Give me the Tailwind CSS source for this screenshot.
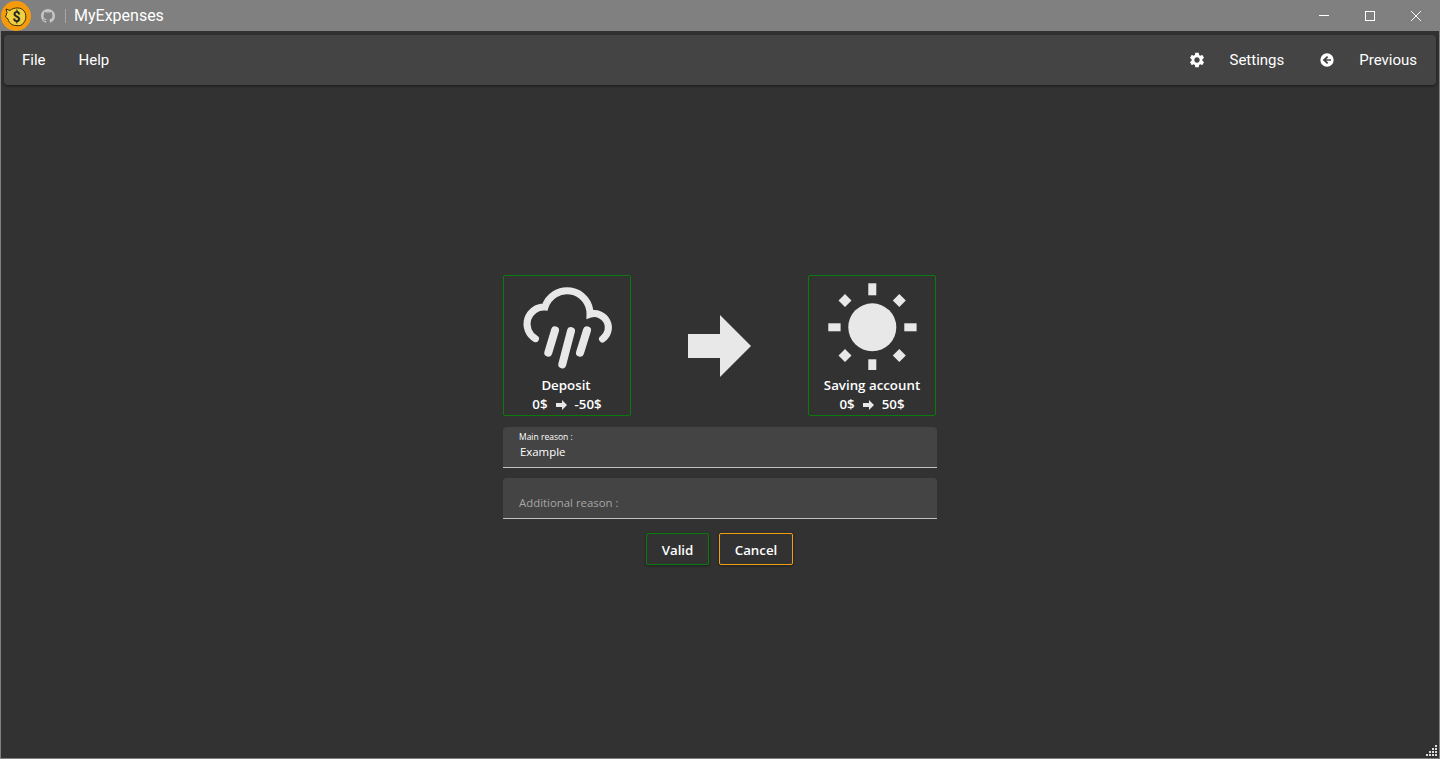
<!DOCTYPE html>
<html><head><meta charset="utf-8">
<script src="https://cdn.jsdelivr.net/npm/@tailwindcss/browser@4"></script>
<title>MyExpenses</title></head>
<body class="m-0 overflow-hidden">
<div class="relative flex h-[759px] w-[1440px] flex-col overflow-hidden border-x border-b border-[#808080] bg-[#323232] font-['Roboto',sans-serif] text-white">
  <header class="flex h-[31px] shrink-0 items-center bg-[#808080] -mx-px">
    <svg class="ml-px h-[30px] w-[30px] shrink-0" viewBox="0 0 30 30">
      <circle cx="15" cy="15" r="15" fill="#f59a0c"/>
      <path d="M5 8 L9 9.500 C13 6 20 6 23 10 C25.500 13 25.500 19 22.500 22 C21.500 24.500 18 25 15 24.500 C11 24.500 8 22 7 18 L4.500 16 L6 11.500 Z" fill="#f0d040" stroke="#3a3000" stroke-width="1"/>
      <text x="15.500" y="20.500" text-anchor="middle" font-size="14" font-weight="700" font-family="Roboto" fill="#222">$</text>
    </svg>
    <svg class="ml-[10px] h-[14px] w-[14px] shrink-0" viewBox="0 0 16 16" fill="#c4c4c4"><path d="M8 0C3.58 0 0 3.58 0 8c0 3.54 2.29 6.53 5.47 7.59.4.07.55-.17.55-.38 0-.19-.01-.82-.01-1.49-2.01.37-2.53-.49-2.69-.94-.09-.23-.48-.94-.82-1.13-.28-.15-.68-.52-.01-.53.63-.01 1.08.58 1.23.82.72 1.21 1.87.87 2.33.66.07-.52.28-.87.51-1.07-1.78-.2-3.64-.89-3.64-3.95 0-.87.31-1.59.82-2.15-.08-.2-.36-1.02.08-2.12 0 0 .67-.21 2.2.82.64-.18 1.32-.27 2-.27s1.36.09 2 .27c1.53-1.04 2.2-.82 2.2-.82.44 1.1.16 1.92.08 2.12.51.56.82 1.27.82 2.15 0 3.07-1.87 3.75-3.65 3.95.29.25.54.73.54 1.48 0 1.07-.01 1.93-.01 2.2 0 .21.15.46.55.38A8.01 8.01 0 0 0 16 8c0-4.42-3.58-8-8-8z"/></svg>
    <div class="ml-[10px] h-[14px] w-px bg-[#a8a8a8]"></div>
    <span class="ml-[8px] pt-px text-base leading-none">MyExpenses</span>
    <div class="ml-auto flex items-center pr-px">
      <div class="flex h-[31px] w-[46px] items-center justify-center"><div class="h-px w-[10px] bg-white"></div></div>
      <div class="flex h-[31px] w-[46px] items-center justify-center"><div class="h-[10px] w-[10px] border border-white"></div></div>
      <div class="flex h-[31px] w-[46px] items-center justify-center"><svg class="h-[10px] w-[10px]" viewBox="0 0 10 10" stroke="white" stroke-width="1"><path d="M0 0L10 10M10 0L0 10"/></svg></div>
    </div>
  </header>

  <nav class="mx-[3px] mt-[4px] flex h-[50px] shrink-0 items-center rounded bg-[#444444] text-[15px] shadow-[0_1px_3px_rgba(0,0,0,0.5)]">
    <span class="ml-[18px]">File</span>
    <span class="ml-[33px]">Help</span>
    <svg class="ml-auto h-[18px] w-[18px]" viewBox="0 0 24 24" fill="white"><path d="M19.14 12.94c.04-.3.06-.61.06-.94 0-.32-.02-.64-.07-.94l2.03-1.58c.18-.14.23-.41.12-.61l-1.92-3.32c-.12-.22-.37-.29-.59-.22l-2.39.96c-.5-.38-1.03-.7-1.62-.94l-.36-2.54c-.04-.24-.24-.41-.48-.41h-3.84c-.24 0-.43.17-.47.41l-.36 2.54c-.59.24-1.13.57-1.62.94l-2.39-.96c-.22-.08-.47 0-.59.22L2.74 8.87c-.12.21-.08.47.12.61l2.03 1.58c-.05.3-.09.63-.09.94s.02.64.07.94l-2.03 1.58c-.18.14-.23.41-.12.61l1.92 3.32c.12.22.37.29.59.22l2.39-.96c.5.38 1.03.7 1.62.94l.36 2.54c.05.24.24.41.48.41h3.84c.24 0 .44-.17.47-.41l.36-2.54c.59-.24 1.13-.56 1.62-.94l2.39.96c.22.08.47 0 .59-.22l1.92-3.32c.12-.22.07-.47-.12-.61l-2.01-1.58zM12 15.6c-1.98 0-3.6-1.62-3.6-3.6s1.62-3.6 3.6-3.6 3.6 1.62 3.6 3.6-1.62 3.6-3.6 3.6z"/></svg>
    <span class="ml-[23px]">Settings</span>
    <svg class="ml-[35px] h-[16px] w-[16px]" viewBox="0 0 24 24" fill="white"><path d="M12 2a10 10 0 1 0 0 20 10 10 0 0 0 0-20zm6 11h-7.200l3.100 3.100-1.900 1.900L5.600 12 12 5.900l1.900 1.900L10.800 11H18z"/></svg>
    <span class="ml-[24px] mr-[19px]">Previous</span>
  </nav>

  <main class="flex flex-1 flex-col items-center pt-[190px]">
    <div class="w-[434px]">
      <div class="flex items-center justify-between pr-px">
        <div class="flex h-[141px] w-[128px] flex-col items-center rounded-[2px] border border-[#0a7a0a] font-['Open_Sans',sans-serif] text-[13.3px] font-semibold">
          <svg class="mt-[1px] h-[93px] w-[126px] shrink-0" viewBox="0 0 126 93" fill="none" stroke="#e8e8e8" stroke-width="7" stroke-linecap="round">
            <path d="M31.500 61.700A17 17 0 0 1 41 30A23 23 0 0 1 86 37.300A14 14 0 0 1 98.500 62"/>
            <path stroke-width="8" d="M51 53.300L44.300 75.700M67 54L58.300 87.300M83 53.300L76 75.700"/>
          </svg>
          <div class="mt-[6px] -translate-x-px leading-[19px]">Deposit</div>
          <div class="flex items-center leading-[19px]">0$<svg class="mx-[8px] h-[10px] w-[11px]" viewBox="0 0 11 10" fill="#e8e8e8"><path d="M0 3h6V0l5 5-5 5V7H0z"/></svg>-50$</div>
        </div>
        <svg class="h-[62px] w-[63px] shrink-0" viewBox="0 0 63 62" fill="#e8e8e8"><path d="M0 19H32V0L63 31 32 62V43H0Z"/></svg>
        <div class="flex h-[141px] w-[128px] flex-col items-center rounded-[2px] border border-[#0a7a0a] font-['Open_Sans',sans-serif] text-[13.3px] font-semibold">
          <svg class="mt-[1px] h-[93px] w-[126px] shrink-0" viewBox="0 0 126 93" fill="#e8e8e8">
            <circle cx="63.300" cy="50.300" r="24"/>
            <rect x="59.300" y="6.300" width="8" height="12"/><rect x="59.300" y="82.300" width="8" height="12"/>
            <rect x="19.300" y="46.300" width="12.300" height="8"/><rect x="95.300" y="46.300" width="12.300" height="8"/>
            <path d="M36 17l6.500 6.500L36 30l-6.500-6.500zM90.300 17l6.500 6.500-6.500 6.500-6.500-6.500zM36 72l6.500 6.500L36 85l-6.500-6.500zM90.300 72l6.500 6.500-6.500 6.500-6.500-6.500z"/>
          </svg>
          <div class="mt-[6px] leading-[19px]">Saving account</div>
          <div class="flex items-center leading-[19px]">0$<svg class="mx-[8px] h-[10px] w-[11px]" viewBox="0 0 11 10" fill="#e8e8e8"><path d="M0 3h6V0l5 5-5 5V7H0z"/></svg>50$</div>
        </div>
      </div>
      <div class="mt-[11px] h-[41px] rounded-t border-b border-[#c0c0c0] bg-[#444444] pl-[16px] font-['Open_Sans',sans-serif]">
        <div class="pt-[4px] text-[8.5px] leading-[12px]">Main reason :</div>
        <div class="mt-[1px] pl-px text-[11.4px] leading-[16px]">Example</div>
      </div>
      <div class="mt-[10px] h-[41px] rounded-t border-b border-[#c0c0c0] bg-[#444444] pl-[16px] pt-[16px] font-['Open_Sans',sans-serif] text-[11.4px] leading-[18px] text-[#a6a6a6]">Additional reason :</div>
      <div class="mt-[14px] flex justify-center gap-[10px] pr-px font-['Open_Sans',sans-serif] text-[13.3px] font-semibold">
        <button class="h-[32px] w-[63px] rounded-[2px] border border-[#0a7a0a] pt-[3px] shadow-[0_1px_3px_rgba(0,0,0,0.4)]">Valid</button>
        <button class="h-[32px] w-[74px] rounded-[2px] border border-[#f0a010] pt-[3px] shadow-[0_1px_3px_rgba(0,0,0,0.4)]">Cancel</button>
      </div>
    </div>
  </main>
  <svg class="absolute bottom-[1px] right-[1px] h-[12px] w-[12px]" viewBox="0 0 12 12" fill="#dcdcdc">
    <rect x="9" y="0" width="2" height="2"/><rect x="6" y="3" width="2" height="2"/><rect x="9" y="3" width="2" height="2"/>
    <rect x="3" y="6" width="2" height="2"/><rect x="6" y="6" width="2" height="2"/><rect x="9" y="6" width="2" height="2"/>
    <rect x="0" y="9" width="2" height="2"/><rect x="3" y="9" width="2" height="2"/><rect x="6" y="9" width="2" height="2"/><rect x="9" y="9" width="2" height="2"/>
  </svg>
</div>
</body></html>
